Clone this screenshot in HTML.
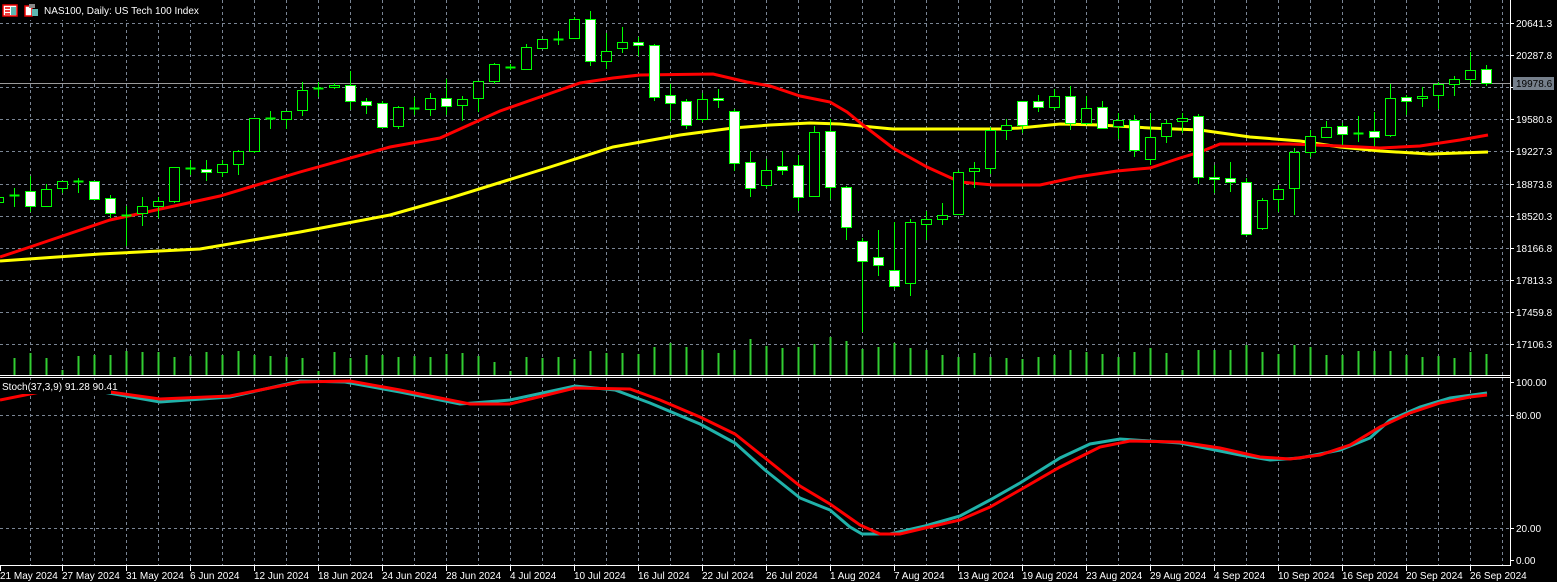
<!DOCTYPE html>
<html><head><meta charset="utf-8"><style>
html,body{margin:0;padding:0;background:#000;width:1557px;height:582px;overflow:hidden}
svg{display:block}
text{font-family:"Liberation Sans","DejaVu Sans",sans-serif;font-size:10px;fill:#fff}
</style></head><body>
<svg id="s" width="1557" height="582" xmlns="http://www.w3.org/2000/svg">
<g id="grid" stroke="#7a8594" stroke-width="1" stroke-dasharray="3,3" fill="none"></g>
<line x1="0" y1="83.5" x2="1510" y2="83.5" stroke="#9a9a9a" stroke-width="1"/>
<g id="vol" stroke="#32cd32" stroke-width="2"></g>
<polyline id="yma" fill="none" stroke="#ffff00" stroke-width="3"/>
<polyline id="rma" fill="none" stroke="#ff0000" stroke-width="3"/>
<g id="cdl"></g>
<polyline id="st1" fill="none" stroke="#20b2aa" stroke-width="3"/>
<polyline id="st2" fill="none" stroke="#ff0000" stroke-width="3"/>
<rect x="0" y="0" width="200" height="20" fill="#000"/>
<rect x="3" y="5" width="14" height="11" fill="#fff" stroke="#e00" stroke-width="1.5"/>
<line x1="5" y1="8" x2="10" y2="8" stroke="#e00" stroke-width="1.5"/><line x1="5" y1="11" x2="10" y2="11" stroke="#e00" stroke-width="1.5"/><line x1="5" y1="14" x2="10" y2="14" stroke="#e00" stroke-width="1.5"/>
<rect x="11" y="7" width="5" height="8" fill="#5cb8b2"/>
<rect x="25" y="6" width="7" height="10" fill="#fff" stroke="#e00" stroke-width="1.5"/>
<rect x="29" y="4" width="6" height="4" fill="#888"/><rect x="32" y="9" width="6" height="7" fill="#5cb8b2"/>
<text x="44" y="14" font-size="10.5">NAS100, Daily:  US Tech 100 Index</text>
<rect x="0" y="380" width="111" height="14" fill="#000"/>
<text x="2" y="390">Stoch(37,3,9) 91.28 90.41</text>
<line x1="0" y1="375.5" x2="1510" y2="375.5" stroke="#fff"/>
<line x1="0" y1="377.5" x2="1510" y2="377.5" stroke="#fff"/>
<line x1="1510.5" y1="0" x2="1510.5" y2="566" stroke="#fff"/>
<line x1="0" y1="565.5" x2="1511" y2="565.5" stroke="#fff"/>
<g id="ticks" stroke="#fff"></g>
<g>
<text x="1516" y="27">20641.3</text>
<text x="1516" y="59">20287.8</text>
<text x="1516" y="123">19580.8</text>
<text x="1516" y="155">19227.3</text>
<text x="1516" y="188">18873.8</text>
<text x="1516" y="220">18520.3</text>
<text x="1516" y="252">18166.8</text>
<text x="1516" y="284">17813.3</text>
<text x="1516" y="316">17459.8</text>
<text x="1516" y="348">17106.3</text>
<rect x="1513" y="77" width="41" height="13" fill="#76808c"/>
<text x="1516" y="87" style="fill:#000">19978.6</text>
<text x="1516" y="386">100.00</text>
<text x="1516" y="419">80.00</text>
<text x="1516" y="532">20.00</text>
<text x="1516" y="564">0.00</text>
</g>
<g>
<text x="0" y="579">21 May 2024</text>
<text x="62" y="579">27 May 2024</text>
<text x="126" y="579">31 May 2024</text>
<text x="190" y="579">6 Jun 2024</text>
<text x="254" y="579">12 Jun 2024</text>
<text x="318" y="579">18 Jun 2024</text>
<text x="382" y="579">24 Jun 2024</text>
<text x="446" y="579">28 Jun 2024</text>
<text x="510" y="579">4 Jul 2024</text>
<text x="574" y="579">10 Jul 2024</text>
<text x="638" y="579">16 Jul 2024</text>
<text x="702" y="579">22 Jul 2024</text>
<text x="766" y="579">26 Jul 2024</text>
<text x="830" y="579">1 Aug 2024</text>
<text x="894" y="579">7 Aug 2024</text>
<text x="958" y="579">13 Aug 2024</text>
<text x="1022" y="579">19 Aug 2024</text>
<text x="1086" y="579">23 Aug 2024</text>
<text x="1150" y="579">29 Aug 2024</text>
<text x="1214" y="579">4 Sep 2024</text>
<text x="1278" y="579">10 Sep 2024</text>
<text x="1342" y="579">16 Sep 2024</text>
<text x="1406" y="579">20 Sep 2024</text>
<text x="1470" y="579">26 Sep 2024</text>
</g>
</svg>
<script>
var NS="http://www.w3.org/2000/svg";
function el(p,t,a){var e=document.createElementNS(NS,t);for(var k in a)e.setAttribute(k,a[k]);p.appendChild(e);return e;}
var g=document.getElementById('grid');
for(var x=30.5;x<1510;x+=32){el(g,'line',{x1:x,y1:0,x2:x,y2:375});el(g,'line',{x1:x,y1:378,x2:x,y2:565});}
[23,55,87,119,151,184,216,248,280,312,344].forEach(function(y){el(g,'line',{x1:0,y1:y+.5,x2:1510,y2:y+.5});el(document.getElementById('ticks'),'line',{x1:1510,y1:y+.5,x2:1514,y2:y+.5});});
[415,528].forEach(function(y){el(g,'line',{x1:0,y1:y+.5,x2:1510,y2:y+.5});});
[382,415,528,560].forEach(function(y){el(document.getElementById('ticks'),'line',{x1:1510,y1:y+.5,x2:1514,y2:y+.5});});
var tk=document.getElementById('ticks');
for(var i=0;i<24;i++){var tx=i==0?0.5:62.5+64*(i-1);el(tk,'line',{x1:tx,y1:566,x2:tx,y2:571});}
var C=[[197,202,195,204,'b'],
[195,195,188,207,'d'],[191,206,176,212,'w'],[189,206,184,206,'b'],[181,188,181,193,'b'],[181,181,178,193,'d'],[181,199,181,200,'w'],[198,213,195,218,'w'],[215,215,206,246,'d'],[206,213,197,226,'b'],[201,206,197,218,'b'],
[167,201,167,203,'b'],[168,168,160,175,'d'],[169,172,160,181,'w'],[164,172,160,177,'b'],[151,164,150,175,'b'],[118,151,118,153,'b'],[118,118,111,129,'d'],[111,119,111,129,'b'],[90,110,82,116,'b'],[88,88,82,97,'d'],
[85,87,83,89,'b'],[85,101,71,110,'w'],[101,105,98,114,'w'],[103,127,101,128,'w'],[107,126,106,129,'b'],[108,108,97,115,'d'],[98,109,93,116,'b'],[98,106,79,115,'w'],[99,105,96,121,'b'],[81,98,81,112,'b'],
[64,81,63,84,'b'],[67,67,64,70,'d'],[47,69,44,70,'b'],[39,48,39,49,'b'],[39,39,31,45,'d'],[19,38,17,38,'b'],[19,61,11,66,'w'],[51,61,33,69,'b'],[42,48,27,53,'b'],[42,45,37,56,'w'],
[45,97,44,101,'w'],[95,103,84,121,'w'],[101,125,99,129,'w'],[99,119,93,122,'b'],[98,100,89,108,'w'],[111,163,109,171,'w'],[162,188,151,197,'w'],[170,185,159,188,'b'],[166,170,151,175,'w'],[165,197,155,211,'w'],
[132,196,126,197,'b'],[131,187,119,199,'w'],[187,227,186,240,'w'],[241,261,238,332,'w'],[257,265,230,276,'w'],[270,286,222,289,'w'],[222,283,219,296,'b'],[219,224,211,240,'b'],[215,219,203,225,'b'],[172,214,170,215,'b'],
[168,171,162,188,'b'],[130,168,127,174,'b'],[125,130,119,140,'b'],[101,125,101,133,'w'],[101,107,95,112,'w'],[96,107,89,110,'b'],[96,123,86,130,'w'],[108,123,96,125,'b'],[107,128,101,128,'w'],[120,126,113,139,'b'],
[120,150,115,157,'w'],[137,159,113,165,'b'],[123,136,120,143,'b'],[118,121,113,133,'b'],[116,177,114,184,'w'],[177,179,165,193,'w'],[178,182,162,192,'w'],[182,234,178,236,'w'],[200,228,198,230,'b'],[189,199,185,212,'b'],
[152,188,148,215,'b'],[136,152,130,157,'b'],[127,137,121,138,'b'],[126,134,123,145,'w'],[133,133,116,142,'d'],[131,137,112,146,'w'],[98,135,84,137,'b'],[97,101,95,115,'w'],[96,98,87,107,'b'],[84,95,82,109,'b'],
[79,84,76,96,'b'],[70,79,52,86,'b'],[69,83,65,86,'w']];
var V=[358,358,353,358,370,356,355,355,351,352,352,357,356,352,355,351,355,356,357,358,371,352,358,355,355,357,356,357,354,353,356,362,371,357,358,357,359,351,353,353,354,347,343,347,350,353,350,339,346,348,347,344,337,341,349,347,343,348,350,355,357,353,357,358,359,357,355,350,352,354,357,352,348,353,370,350,350,350,345,352,354,345,347,355,355,351,351,351,355,357,356,358,352,354];
var cg=document.getElementById('cdl'),vg=document.getElementById('vol');
C.forEach(function(c,i){var cx=-2+16*i+.5;
 el(vg,'line',{x1:cx,y1:V[i],x2:cx,y2:375});
 el(cg,'line',{x1:cx,y1:c[2],x2:cx,y2:c[3],stroke:'#00ff00','stroke-width':1});
 if(c[4]=='d'){el(cg,'line',{x1:cx-5,y1:c[0]+.5,x2:cx+5,y2:c[0]+.5,stroke:'#00ff00','stroke-width':2});}
 else{var h=Math.max(c[1]-c[0],2);el(cg,'rect',{x:cx-5,y:c[0]+.5,width:10,height:h,fill:c[4]=='w'?'#fff':'#000',stroke:'#00ff00','stroke-width':1});}
});
function pl(id,s){document.getElementById(id).setAttribute('points',s);}
pl('rma','0,257 30,247 110,220 220,196 300,172 390,147 440,138 500,111 540,97 580,83 613,78 640,75 713,74 747,82 770,86 800,96 830,102 847,112 863,125 893,148 927,167 960,182 993,185 1040,185 1077,177 1117,171 1150,168 1180,158 1200,152 1220,144 1290,144 1340,146 1380,148 1420,146 1460,140 1488,135');
pl('yma','0,261 100,254 200,249 300,232 390,215 450,198 547,168 613,147 680,135 733,128 770,125 810,123 840,124 893,129 1000,129 1020,128 1060,124 1100,125 1150,128 1200,130 1250,137 1300,141 1340,147 1380,151 1430,154 1488,152');
pl('st1','0,392 103,392 160,402 230,397 300,381 345,382 400,392 460,404 510,400 575,386 615,390 650,403 700,424 735,443 765,470 800,498 830,510 850,527 862,534 890,534 925,526 960,516 990,500 1020,483 1060,458 1090,444 1120,439 1150,441 1180,443 1200,447 1240,455 1270,460 1300,458 1340,450 1370,438 1390,420 1420,407 1450,398 1487,393');
pl('st2','0,400 40,392 103,391 160,399 230,396 300,382 350,381 400,390 470,404 510,404 575,388 630,389 660,400 700,417 735,434 765,458 800,486 830,504 860,525 880,534 900,534 925,528 960,520 990,507 1020,490 1060,467 1090,452 1100,447 1130,441 1180,442 1220,448 1260,457 1290,459 1320,455 1350,445 1380,427 1410,413 1440,403 1470,397 1487,395');
</script>
</body></html>
